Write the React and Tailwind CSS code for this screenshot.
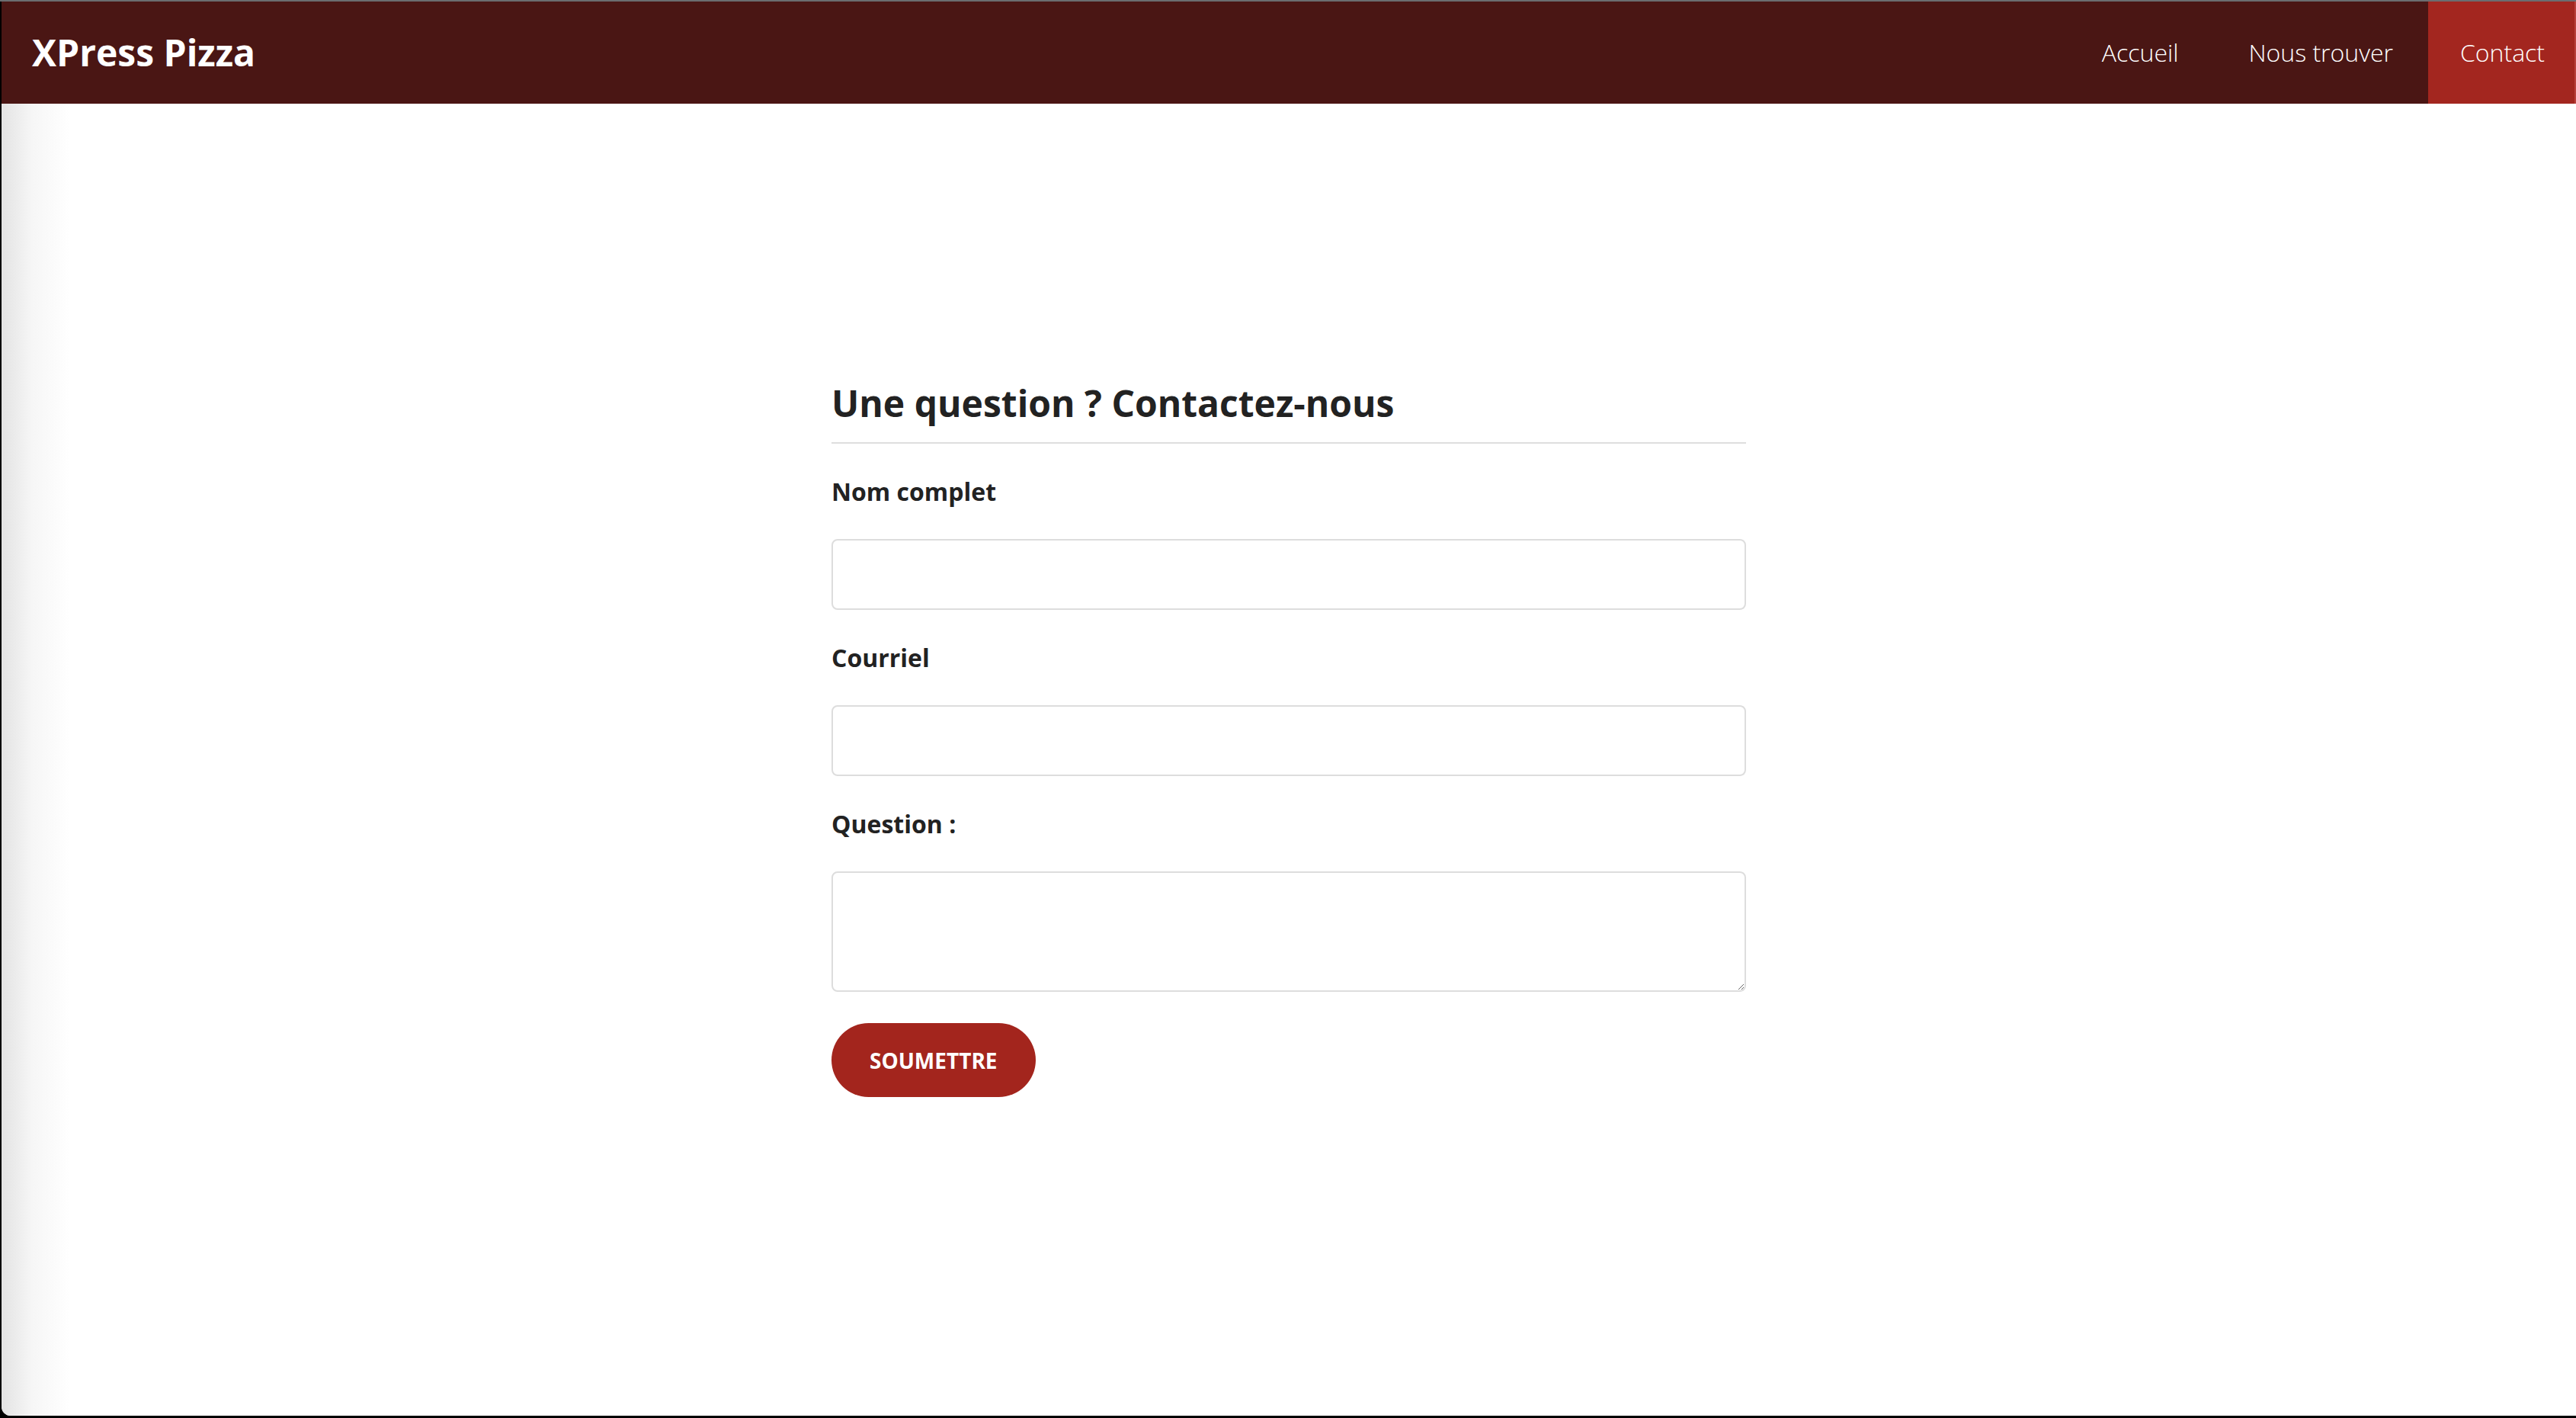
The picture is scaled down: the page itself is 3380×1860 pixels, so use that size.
import React from 'react'

const NavLink = ({ label, active }) => (
  <a
    href="#"
    className={
      active
        ? 'flex items-center h-full pl-[42px] pr-[39px] bg-[#a3261f] text-white'
        : 'flex items-center h-full px-[46px] text-white'
    }
  >
    {label}
  </a>
)

const Field = ({ label, children }) => (
  <div className="flex flex-col">
    <label className="text-[32px] leading-[48px] font-bold text-[#222] mt-[39px] mb-[38px]">{label}</label>
    {children}
  </div>
)

export default function App() {
  return (
    <div className="w-[3380px] h-[1860px] bg-black border-t-2 border-[#6b6d70] pl-[2px] pb-[3px] font-['Open_Sans',sans-serif]">
      <div className="h-full flex flex-col bg-white rounded-bl-[12px] overflow-hidden">
        {/* top bar */}
        <header className="h-[134px] flex items-stretch justify-between bg-[#4a1614] pl-[40px] border-r-2 border-[#b8403a]">
          <div className="flex items-center text-[48px] font-bold text-white">XPress Pizza</div>
          <nav className="flex items-stretch text-[32px] font-light">
            <NavLink label="Accueil" />
            <NavLink label="Nous trouver" />
            <NavLink label="Contact" active />
          </nav>
        </header>

        <main className="flex-1 bg-[linear-gradient(to_right,#e3e3e3_0px,#f6f6f6_40px,#ffffff_90px)]">
          <form className="w-[1200px] mx-auto pt-[364px]">
            <h2 className="text-[48px] leading-[58px] font-bold text-[#222] pb-[22px] border-b-2 border-[#dedede]">
              Une question ? Contactez-nous
            </h2>

            <Field label="Nom complet">
              <input type="text" className="h-[93px] border-2 border-[#dddddd] rounded-[8px] bg-white px-6 text-[32px]" />
            </Field>

            <Field label="Courriel">
              <input type="email" className="h-[93px] border-2 border-[#dddddd] rounded-[8px] bg-white px-6 text-[32px]" />
            </Field>

            <Field label="Question :">
              <textarea className="h-[158px] border-2 border-[#dddddd] rounded-[8px] bg-white px-6 py-4 text-[32px]" />
            </Field>

            <button
              type="button"
              className="mt-[41px] h-[97px] px-[50px] rounded-full bg-[#a3251d] text-white text-[28px] font-bold uppercase"
            >
              Soumettre
            </button>
          </form>
        </main>
      </div>
    </div>
  )
}
